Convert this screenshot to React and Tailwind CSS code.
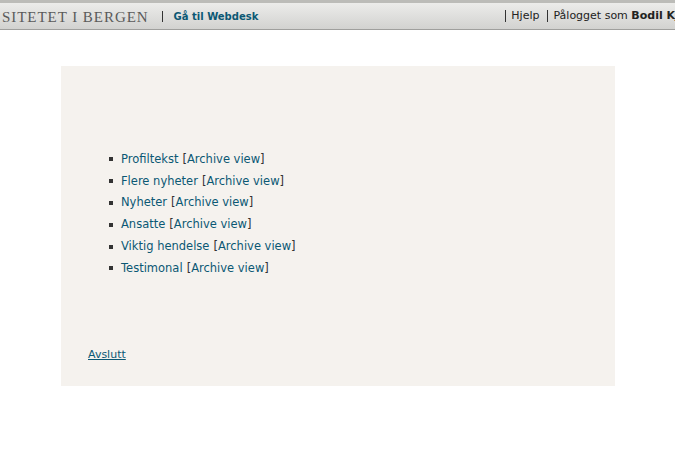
import React from "react";

const items = ["Profiltekst", "Flere nyheter", "Nyheter", "Ansatte", "Viktig hendelse", "Testimonal"];

export default function App() {
  return (
    <div className="min-h-[457px] bg-white font-['DejaVu_Sans',sans-serif] overflow-hidden">
      <div className="h-[30px] w-[723px] overflow-hidden flex flex-col">
        <div className="h-[3px] bg-[#bcbcb8]" />
        <div className="flex-1 flex items-center whitespace-nowrap bg-[linear-gradient(#ececea,#d2d2d0)] border-b border-[#9f9f9d] pl-[2px]">
          <span className="font-['Liberation_Serif',serif] text-[15px] tracking-[0.95px] text-[#5a5a5a] mt-[2px]">SITETET I BERGEN</span>
          <span className="ml-[13px] w-[1px] h-[11px] bg-[#333]" />
          <span className="ml-[11px] text-[10px] font-bold text-[#0b5874]">Gå til Webdesk</span>
          <span className="ml-auto flex items-center text-[11px] text-[#222]">
            <span className="w-[1px] h-[12px] bg-[#333]" />
            <span className="ml-[5px]">Hjelp</span>
            <span className="ml-[8px] w-[1px] h-[12px] bg-[#333]" />
            <span className="ml-[5px]">Pålogget som <b>Bodil Kjelstrup</b></span>
          </span>
        </div>
      </div>
      <div className="ml-[61px] mt-[36px] w-[554px] h-[320px] bg-[#f5f2ee] pt-[82.5px] text-[11.5px]">
        <ul>
          {items.map((t) => (
            <li key={t} className="flex items-center h-[21.8px] ml-[48px]">
              <span className="w-[4px] h-[4px] bg-[#333] mr-[8px]" />
              <span className="text-[#0b5874]">{t}</span>
              <span className="ml-[4px] text-[#333]">[</span>
              <span className="text-[#0b5874]">Archive view</span>
              <span className="text-[#333]">]</span>
            </li>
          ))}
        </ul>
        <div className="mt-[64.5px] ml-[27px] leading-[22px] text-[11px]">
          <a className="underline text-[#0b5874]">Avslutt</a>
        </div>
      </div>
    </div>
  );
}
